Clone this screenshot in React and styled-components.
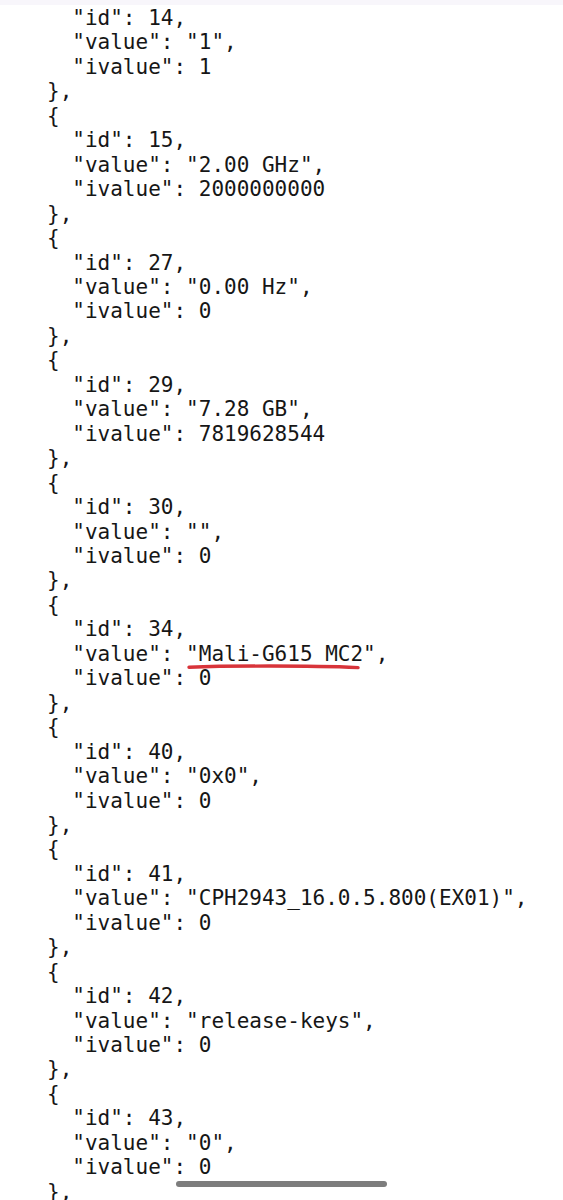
import React from "react";
import styled, { createGlobalStyle } from "styled-components";

const Global = createGlobalStyle`
  html, body { margin: 0; padding: 0; background: #ffffff; }
  body { overflow: hidden; }
`;

const Screen = styled.div`
  position: relative;
  width: 563px;
  height: 1200px;
  overflow: hidden;
  background: #ffffff;
  display: flex;
  flex-direction: column;
`;

const StatusStrip = styled.div`
  height: 5px;
  flex: none;
  background: #f8f6fb;
`;

const Code = styled.div`
  font-family: "DejaVu Sans Mono", "Liberation Mono", monospace;
  font-size: 21px;
  line-height: 24.46px;
  color: #161616;
  padding-left: 47px;
  padding-top: 1px;
  white-space: pre;
  display: flex;
  flex-direction: column;
`;

const Line = styled.div`
  padding-left: ${(p) => p.$indent * 25.3}px;
  height: 24.46px;
`;

const Marked = styled.span`
  position: relative;
  display: inline-block;
`;

const Stroke = styled.svg`
  position: absolute;
  left: 2px;
  top: 20px;
  width: 172px;
  height: 8px;
  overflow: visible;
`;

const HomeHandle = styled.div`
  position: absolute;
  left: 176px;
  top: 1181px;
  width: 211px;
  height: 6px;
  border-radius: 3px;
  background: #7d7d7d;
`;

const entries = [
  { id: 15, value: '"2.00 GHz"', ivalue: "2000000000" },
  { id: 27, value: '"0.00 Hz"', ivalue: "0" },
  { id: 29, value: '"7.28 GB"', ivalue: "7819628544" },
  { id: 30, value: '""', ivalue: "0" },
  { id: 34, value: '"Mali-G615 MC2"', ivalue: "0", marked: true },
  { id: 40, value: '"0x0"', ivalue: "0" },
  { id: 41, value: '"CPH2943_16.0.5.800(EX01)"', ivalue: "0" },
  { id: 42, value: '"release-keys"', ivalue: "0" },
  { id: 43, value: '"0"', ivalue: "0" },
];

function Field({ name, children, comma }) {
  return (
    <Line $indent={1}>
      {`"${name}": `}
      {children}
      {comma ? "," : ""}
    </Line>
  );
}

function Entry({ id, value, ivalue, marked, open = true }) {
  return (
    <>
      {open && <Line $indent={0}>{"{"}</Line>}
      <Field name="id" comma>{String(id)}</Field>
      <Field name="value" comma>
        {marked ? (
          <Marked>
            {value}
            <Stroke viewBox="0 0 172 8">
              <path
                d="M1 5.2 C 40 3.8, 120 3.4, 170 5.6"
                fill="none"
                stroke="#d8343a"
                strokeWidth="3.4"
                strokeLinecap="round"
              />
            </Stroke>
          </Marked>
        ) : (
          value
        )}
      </Field>
      <Field name="ivalue">{ivalue}</Field>
      <Line $indent={0}>{"},"}</Line>
    </>
  );
}

export default function App() {
  return (
    <Screen>
      <Global />
      <StatusStrip />
      <Code>
        <Entry id={14} value={'"1"'} ivalue="1" open={false} />
        {entries.map((e) => (
          <Entry key={e.id} {...e} />
        ))}
      </Code>
      <HomeHandle />
    </Screen>
  );
}
